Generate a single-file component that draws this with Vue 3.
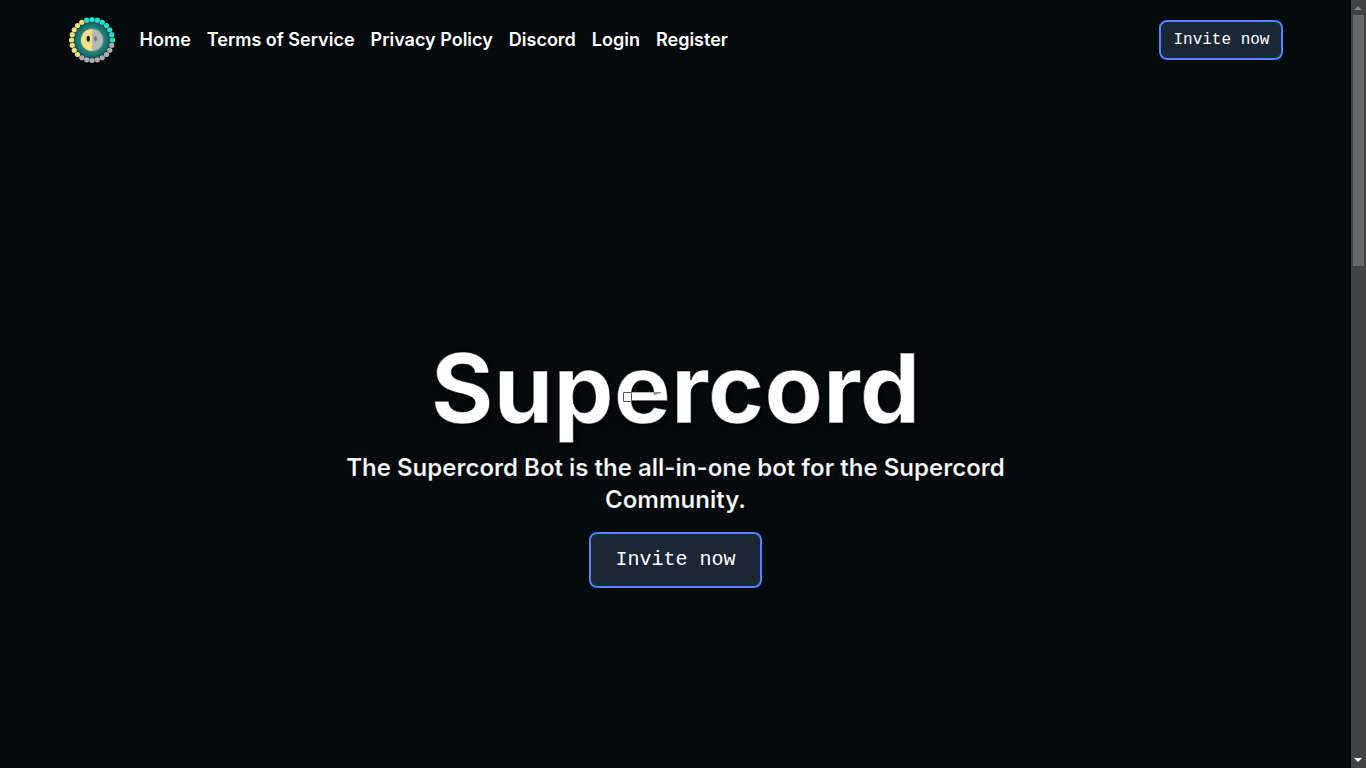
<script setup>
const links = ['Home', 'Terms of Service', 'Privacy Policy', 'Discord', 'Login', 'Register']

const beads = Array.from({ length: 24 }, (_, i) => {
  const angle = (i * 15 - 90) * Math.PI / 180
  let color = '#20e0cc'
  if (i > 6 && i < 15) color = '#a9adac'
  if (i >= 15 && i < 23) color = '#f3dc7c'
  return { x: 24 + 20.5 * Math.cos(angle), y: 24 + 20.5 * Math.sin(angle), color }
})
</script>

<template>
  <div class="shell">
    <div class="page">
      <header class="bar">
        <a href="#" class="logo" aria-label="Supercord">
          <svg viewBox="0 0 48 48" width="48" height="48" aria-hidden="true">
            <defs>
              <radialGradient id="glow">
                <stop offset="0.5" stop-color="#2c8b84" />
                <stop offset="0.8" stop-color="#1b6e69" />
                <stop offset="1" stop-color="#0a3335" />
              </radialGradient>
              <filter id="soft"><feGaussianBlur stdDeviation="0.6" /></filter>
            </defs>
            <g filter="url(#soft)">
              <circle cx="24" cy="24" r="20" fill="url(#glow)" />
              <circle v-for="(b, i) in beads" :key="i" :cx="b.x" :cy="b.y" r="2.6" :fill="b.color" />
              <circle cx="24" cy="24" r="12" fill="#348e85" />
              <path d="M24 13a11 11 0 0 0 0 22z" fill="#f8df80" />
              <path d="M24 13a11 11 0 0 1 0 22z" fill="#b7b9b9" />
              <ellipse cx="20.3" cy="22.7" rx="1.7" ry="3" fill="#191d18" />
              <ellipse cx="27.5" cy="22.7" rx="1.5" ry="2.8" fill="#777b7b" />
            </g>
          </svg>
        </a>
        <nav class="links">
          <a v-for="link in links" :key="link" href="#">{{ link }}</a>
        </nav>
        <button type="button" class="invite">Invite now</button>
      </header>
      <main class="hero">
        <h1>
          Supercord
          <svg class="seam" viewBox="0 0 40 12" width="40" height="12" aria-hidden="true">
            <path d="M0.5 1.5h8v9h-8z" fill="#fff" stroke="#555" />
            <path d="M31 1.5h7l-7 2z" fill="#999" stroke="#777" stroke-width="0.7" />
          </svg>
        </h1>
        <p>The Supercord Bot is the all-in-one bot for the Supercord Community.</p>
        <button type="button" class="invite large">Invite now</button>
      </main>
    </div>
    <div class="scrollbar" aria-hidden="true">
      <svg viewBox="0 0 15 15" width="15" height="15"><path d="M3 10h8L7 6z" fill="#868686" /></svg>
      <div class="track"><div class="thumb"></div></div>
      <svg viewBox="0 0 15 15" width="15" height="15"><path d="M3 5h8L7 9z" fill="#fff" /></svg>
    </div>
  </div>
</template>

<style>
body {
  margin: 0;
  background: #050b0d;
}
</style>

<style scoped>
.shell {
  display: flex;
  height: 100vh;
  overflow: hidden;
  background: #050b0d;
  color: #fff;
  font-family: Inter, sans-serif;
}
.page {
  flex: 1;
  min-width: 0;
  overflow: hidden;
}
.bar {
  display: flex;
  align-items: center;
  gap: 24px;
  padding: 16px 5%;
}
.logo {
  display: flex;
}
.links {
  display: flex;
  flex: 1;
  gap: 16px;
  font-size: 18px;
  line-height: 28px;
  font-weight: 600;
}
.links a {
  color: #fff;
  text-decoration: none;
  white-space: nowrap;
}
.invite {
  padding: 6px 12px;
  border: 2px solid #4f84ff;
  border-radius: 8px;
  background: #1c2736;
  color: #fff;
  font: 16px/24px "Liberation Mono", monospace;
  cursor: pointer;
}
.hero {
  display: flex;
  flex-direction: column;
  align-items: center;
  justify-content: center;
  min-height: 100vh;
  text-align: center;
}
h1 {
  position: relative;
  margin: 0;
  font-size: 96px;
  line-height: 96px;
  font-weight: 700;
  -webkit-text-stroke: 1px rgba(0, 0, 0, 0.6);
  text-shadow: 2px 2px 4px #000;
}
.seam {
  position: absolute;
  top: 51px;
  left: calc(50% - 52px);
}
p {
  max-width: 672px;
  margin: 16px 0;
  color: #fff;
  font-size: 24px;
  line-height: 32px;
  font-weight: 600;
  -webkit-text-stroke: 1px rgba(0, 0, 0, 0.2);
}
.large {
  padding: 12px 24px;
  font-size: 20px;
  line-height: 28px;
}
.scrollbar {
  display: flex;
  flex-direction: column;
  width: 15px;
  background: #424242;
}
.track {
  flex: 1;
  padding: 0 2px;
}
.thumb {
  height: 34%;
  background: #686868;
}
</style>
